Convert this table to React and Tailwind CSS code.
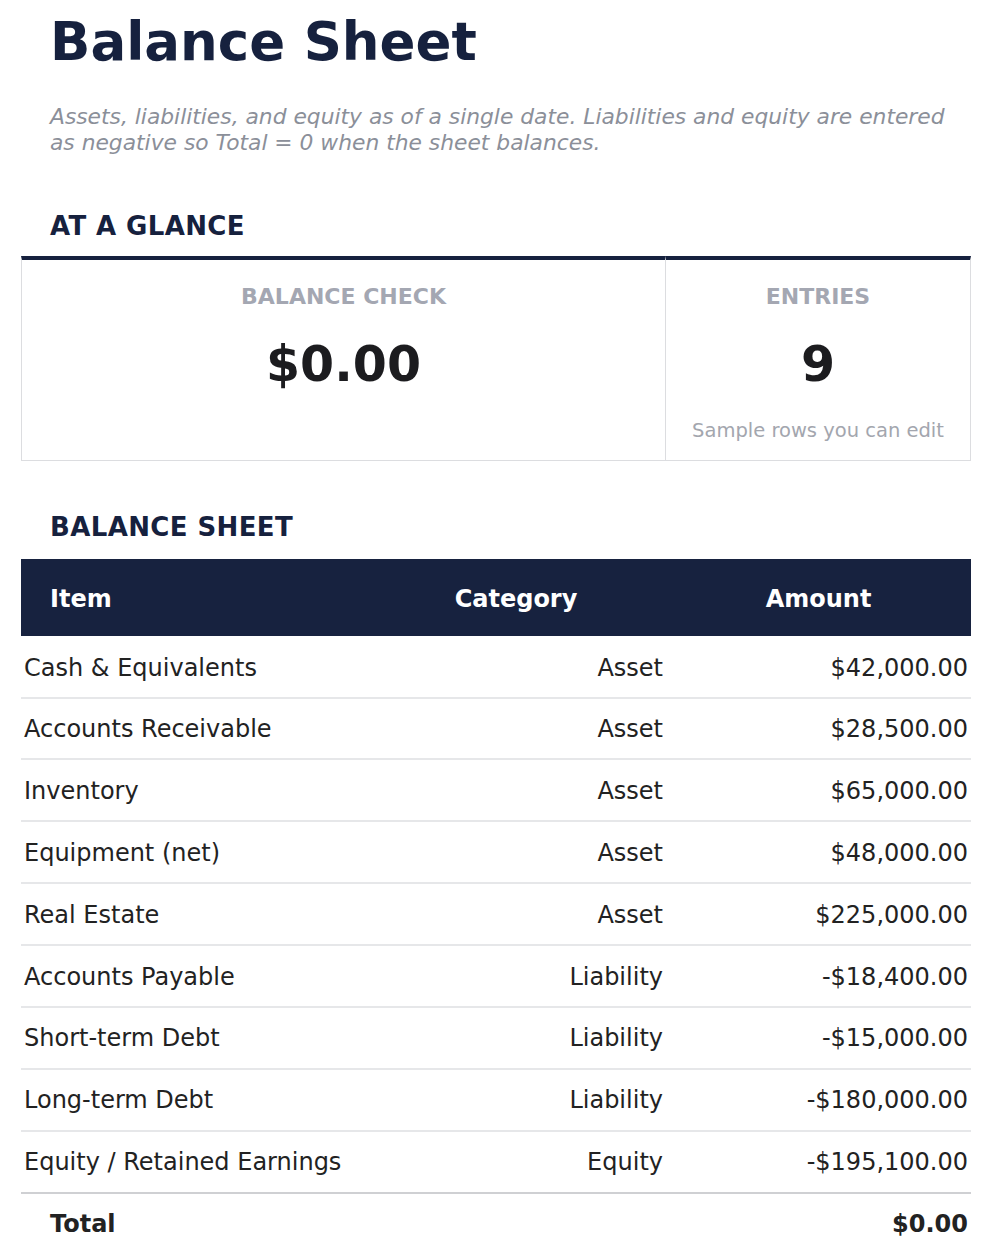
import React from "react";

const rows = [
  ["Cash & Equivalents", "Asset", "$42,000.00"],
  ["Accounts Receivable", "Asset", "$28,500.00"],
  ["Inventory", "Asset", "$65,000.00"],
  ["Equipment (net)", "Asset", "$48,000.00"],
  ["Real Estate", "Asset", "$225,000.00"],
  ["Accounts Payable", "Liability", "-$18,400.00"],
  ["Short-term Debt", "Liability", "-$15,000.00"],
  ["Long-term Debt", "Liability", "-$180,000.00"],
  ["Equity / Retained Earnings", "Equity", "-$195,100.00"],
];

export default function App() {
  return (
    <div
      className="bg-white w-[992px] min-h-[1256px] px-[21px] pt-[10px] text-[#222222]"
      style={{ fontFamily: '"DejaVu Sans", Verdana, sans-serif' }}
    >
      <h1 className="pl-[29px] text-[53px] leading-[1.2] font-bold text-[#16213e]">
        Balance Sheet
      </h1>
      <p className="pl-[29px] mt-[30px] text-[21.8px] leading-[26px] italic whitespace-nowrap text-[#8b8f99]">
        Assets, liabilities, and equity as of a single date. Liabilities and equity are entered
        <br />
        as negative so Total = 0 when the sheet balances.
      </p>

      <h2 className="pl-[29px] mt-[55px] text-[26px] leading-[1.2] font-bold tracking-[0.015em] text-[#16213e]">
        AT A GLANCE
      </h2>
      <div className="mt-[14px] grid grid-cols-[645px_305px]">
        <div className="border border-[#dcdde0] border-t-[4px] border-t-[#16213e] pt-[24px] pb-[18px] flex flex-col items-center">
          <div className="text-[22px] leading-[1.2] font-bold text-[#a4a7b2]">BALANCE CHECK</div>
          <div className="mt-[26px] text-[49px] leading-[1.2] font-bold text-[#1c1c1f]">$0.00</div>
        </div>
        <div className="border border-l-0 border-[#dcdde0] border-t-[4px] border-t-[#16213e] pt-[24px] pb-[18px] flex flex-col items-center">
          <div className="text-[22px] leading-[1.2] font-bold text-[#a4a7b2]">ENTRIES</div>
          <div className="mt-[26px] text-[49px] leading-[1.2] font-bold text-[#1c1c1f]">9</div>
          <div className="mt-[24px] text-[19.5px] leading-[1.2] text-[#a3a6ae]">Sample rows you can edit</div>
        </div>
      </div>

      <h2 className="pl-[29px] mt-[51px] text-[26px] leading-[1.2] font-bold tracking-[0.015em] text-[#16213e]">
        BALANCE SHEET
      </h2>
      <div className="mt-[15px]">
        <div className="grid grid-cols-[345px_300px_305px] h-[77px] pt-[3px] items-center bg-[#17223f] text-white text-[24px] font-bold">
          <div className="pl-[29px]">Item</div>
          <div className="text-center">Category</div>
          <div className="text-center">Amount</div>
        </div>
        {rows.map(([item, cat, amt], i) => (
          <div
            key={item}
            className={
              "grid grid-cols-[345px_300px_305px] items-center text-[24px] border-b-2 " +
              (i === 0 ? "h-[63px] pt-[3px] " : "h-[61.9px] pt-[1px] ") +
              (i === rows.length - 1 ? "border-[#cfd0d3]" : "border-[#e6e7e9]")
            }
          >
            <div className="pl-[3px]">{item}</div>
            <div className="text-right pr-[3px]">{cat}</div>
            <div className="text-right pr-[3px]">{amt}</div>
          </div>
        ))}
        <div className="grid grid-cols-[345px_300px_305px] h-[60px] items-center text-[24px] font-bold">
          <div className="pl-[29px]">Total</div>
          <div></div>
          <div className="text-right pr-[3px]">$0.00</div>
        </div>
      </div>
    </div>
  );
}
